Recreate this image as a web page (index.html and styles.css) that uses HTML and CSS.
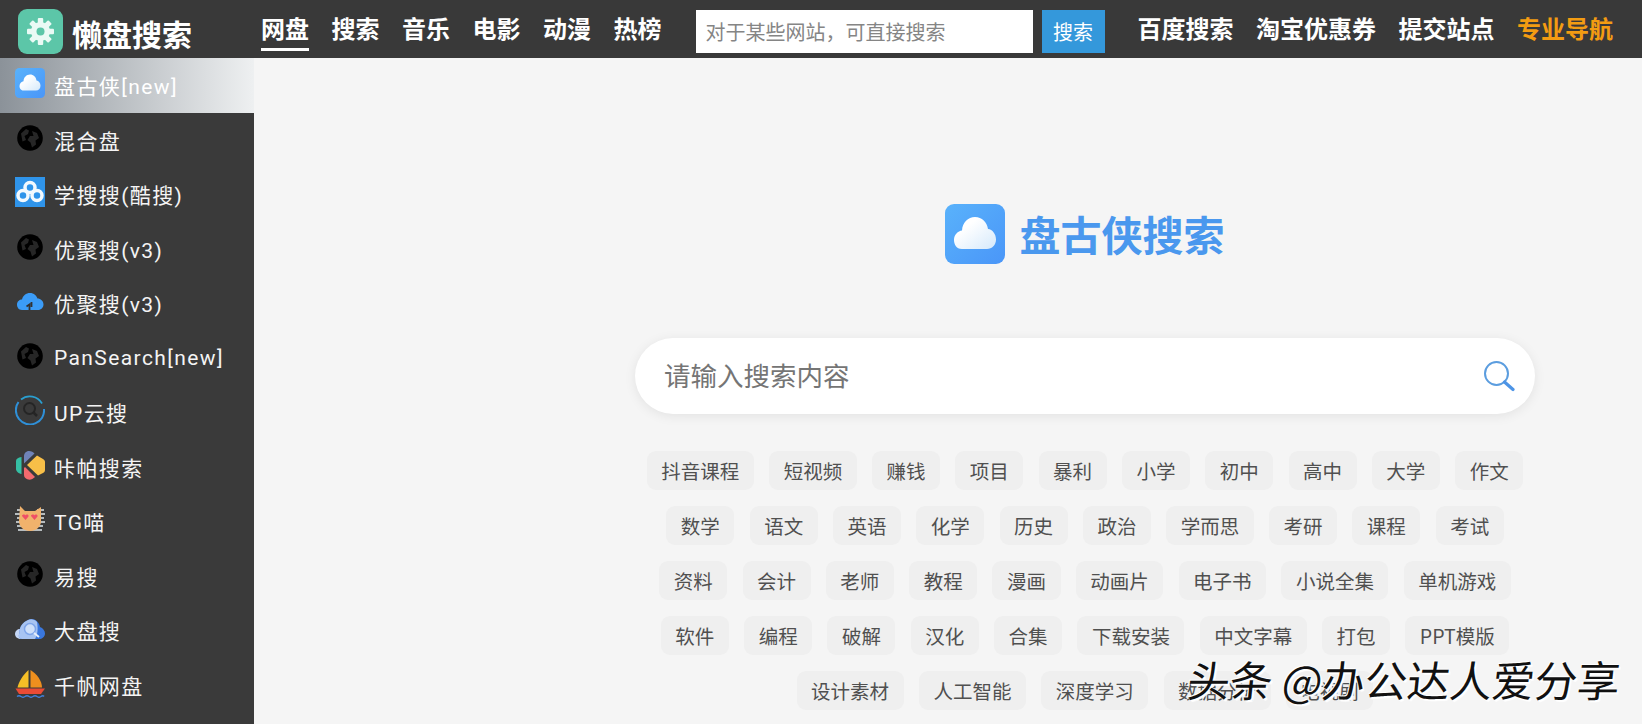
FILE: index.html
```html
<!DOCTYPE html>
<html lang="zh-CN">
<head>
<meta charset="utf-8">
<title>懒盘搜索</title>
<link rel="stylesheet" href="styles.css">
</head>
<body>
<svg class="sprites" width="0" height="0" aria-hidden="true">
  <defs>
    <linearGradient id="gBlue" x1="0" y1="0" x2="1" y2="1"><stop offset="0" stop-color="#59b2fb"/><stop offset="1" stop-color="#4a96f8"/></linearGradient>
    <linearGradient id="gCloud" x1="0" y1="0" x2="1" y2="1"><stop offset="0.300" stop-color="#ffffff"/><stop offset="1" stop-color="#d5e9fb"/></linearGradient>
    <symbol id="cloudlogo" viewBox="0 0 60 60">
      <rect width="60" height="60" rx="9" fill="url(#gBlue)"/>
      <path d="M17 45C11 45 9 40 9 36C9 30.500 13 27 17 26.500C17.500 18.500 23 13 30 13C37 13 42 18 43 25C47.500 25.500 51 30 51 35.500C51 41 47 45 42 45Z" fill="url(#gCloud)"/>
    </symbol>
    <symbol id="globe" viewBox="0 0 30 30">
      <circle cx="15" cy="15" r="12.800" fill="#000"/>
      <path d="M6 10.500L11 6L14 7.500L13 11L9.500 13L11 17L7.500 18.500ZM17 8L22 10L24 15L20.500 17.500L21 21.500L17 24.500L15.500 19.500L12.500 17L15 13L18.500 13Z" fill="#262626"/>
    </symbol>
  </defs>
</svg>

<header class="topbar">
  <a class="brand">
    <span class="brand-icon">
      <svg viewBox="0 0 45 45" width="45" height="45">
        <g fill="#eafaf5">
          <circle cx="22.500" cy="22.500" r="9.500"/>
          <rect x="19.800" y="9" width="5.400" height="27" rx="1"/>
          <rect x="19.800" y="9" width="5.400" height="27" rx="1" transform="rotate(45 22.500 22.500)"/>
          <rect x="19.800" y="9" width="5.400" height="27" rx="1" transform="rotate(90 22.500 22.500)"/>
          <rect x="19.800" y="9" width="5.400" height="27" rx="1" transform="rotate(135 22.500 22.500)"/>
        </g>
        <circle cx="22.500" cy="22.500" r="4" fill="#5cc6a8"/>
      </svg>
    </span>
    <span class="brand-name">懒盘搜索</span>
  </a>
  <nav class="nav nav-main">
    <a class="nav-link nav-current">网盘</a>
    <a class="nav-link">搜索</a>
    <a class="nav-link">音乐</a>
    <a class="nav-link">电影</a>
    <a class="nav-link">动漫</a>
    <a class="nav-link">热榜</a>
  </nav>
  <form class="top-search">
    <input class="top-input" type="text" placeholder="对于某些网站，可直接搜索">
    <button class="top-btn" type="button">搜索</button>
  </form>
  <nav class="nav nav-right">
    <a class="nav-link">百度搜索</a>
    <a class="nav-link">淘宝优惠券</a>
    <a class="nav-link">提交站点</a>
    <a class="nav-link nav-pro">专业导航</a>
  </nav>
</header>

<div class="layout">
  <aside class="sidebar">
    <a class="side-item side-active">
      <svg class="side-icon"><use href="#cloudlogo"/></svg>
      <span>盘古侠[new]</span>
    </a>
    <a class="side-item">
      <svg class="side-icon"><use href="#globe"/></svg>
      <span>混合盘</span>
    </a>
    <a class="side-item">
      <svg class="side-icon" viewBox="0 0 30 30">
        <rect width="30" height="30" fill="#2f94ea"/>
        <g fill="none" stroke="#f2f9fe" stroke-width="3.500">
          <circle cx="15" cy="10.500" r="5"/>
          <circle cx="8" cy="18.500" r="5"/>
          <circle cx="22" cy="18.500" r="5"/>
        </g>
      </svg>
      <span>学搜搜(酷搜)</span>
    </a>
    <a class="side-item">
      <svg class="side-icon"><use href="#globe"/></svg>
      <span>优聚搜(v3)</span>
    </a>
    <a class="side-item">
      <svg class="side-icon" viewBox="0 0 30 30">
        <path d="M7 24C3.500 24 2 21 2 18.500C2 15.500 4.500 13.500 7 13.500C8 9.500 11 7 15 7C19 7 21.500 9.500 22.500 12.500C25.500 12.500 28.500 15 28.500 18.500C28.500 21.500 26 24 23 24Z" fill="#3b9cf7"/>
        <path d="M14.500 24V18.500L11.500 20.500M16.500 16V21" fill="none" stroke="#333" stroke-width="1.800"/>
      </svg>
      <span>优聚搜(v3)</span>
    </a>
    <a class="side-item">
      <svg class="side-icon"><use href="#globe"/></svg>
      <span>PanSearch[new]</span>
    </a>
    <a class="side-item">
      <svg class="side-icon" viewBox="0 0 30 30">
        <path d="M6 4.500A14 14 0 0 1 27 8.500" fill="none" stroke="#2a9fd0" stroke-width="1.800"/>
        <path d="M29 14A14 14 0 0 1 4 24A14 14 0 0 1 3.500 7" fill="none" stroke="#2f90d8" stroke-width="2"/>
        <circle cx="14.500" cy="13.500" r="5.500" fill="none" stroke="#252525" stroke-width="2"/>
        <path d="M18.500 17.500L22 21" stroke="#252525" stroke-width="2.500"/>
      </svg>
      <span>UP云搜</span>
    </a>
    <a class="side-item">
      <svg class="side-icon" viewBox="0 0 30 30">
        <path d="M6.500 7V24C3 23.500 1 21 1 19V11C1 9 3 7.500 6.500 7Z" fill="#35bfa4"/>
        <path d="M9 6C9 3.500 11 1 14 1C16.500 1 18 2 19.500 3.500L9 13.500Z" fill="#6f83b8"/>
        <path d="M12 15L22 5.500L28 9C29.500 10 30 11 30 12V20C30 21.500 29 22.500 28 23L23 25.500Z" fill="#f8bf48"/>
        <path d="M10 17L20 27C18 29 15.500 30 13 29.500C10.500 29 9 27 9 25V18Z" fill="#f26a6e"/>
      </svg>
      <span>咔帕搜索</span>
    </a>
    <a class="side-item">
      <svg class="side-icon" viewBox="0 0 30 30">
        <path d="M2 6H8M22 6H29M0 10H6M24 10H30M2 14H5M25 14H29M1 18H5M25 18H30M2 22H8M22 22H28M3 26H27" stroke="#dfe7ea" stroke-width="1.600"/>
        <path d="M5 2L10 7H20L26 3V17C26 23 21 27 15 27C9 27 4 23 4 17Z" fill="#f0b26c"/>
        <path d="M7 12C7 10 10 10 10.500 11.500C11 10 14 10 13.500 12.500L10.500 16ZM16 12C16 10 19 10 19.500 11.500C20 10 23 10 22.500 12.500L19.500 16Z" fill="#ef4f66"/>
      </svg>
      <span>TG喵</span>
    </a>
    <a class="side-item">
      <svg class="side-icon"><use href="#globe"/></svg>
      <span>易搜</span>
    </a>
    <a class="side-item">
      <svg class="side-icon" viewBox="0 0 30 30">
        <path d="M6 26C2 26 0 23.500 0 21C0 18 2.500 16 5 16L10 24Z" fill="#c5d6f5"/>
        <path d="M7 26C4 26 3 23 4.500 20C4 14 8 9 13 7C18 4 24 8 25 14C28 15 30 18 30 20.500C30 24 27 26 24 26Z" fill="#3a77dd"/>
        <path d="M7 26C4 26 3 23 4.500 20C4 14 8 9 13 7C16 5.500 20 6.500 22 9C23 14 23 22 20 26Z" fill="#a8c4f2"/>
        <circle cx="15" cy="16" r="5.500" fill="#cfe0fa" stroke="#7fa6ea" stroke-width="1.500"/>
        <path d="M19 20L24 24" stroke="#e6effc" stroke-width="2"/>
      </svg>
      <span>大盘搜</span>
    </a>
    <a class="side-item">
      <svg class="side-icon" viewBox="0 0 30 30">
        <path d="M13.500 2V19.500H2.500C4 13 8 7 13.500 2Z" fill="#f6bf26"/>
        <path d="M15.500 2C22 6 27 13 27 19.500H15.500Z" fill="#ef8f1e"/>
        <path d="M0.500 20.500H30L26 26H4Z" fill="#e94b35"/>
        <path d="M2 28.500Q4 27 6 28.500T10 28.500T14 28.500T18 28.500T22 28.500T26 28.500T29 28.500" fill="none" stroke="#3f7fd8" stroke-width="1.500"/>
      </svg>
      <span>千帆网盘</span>
    </a>
  </aside>

  <main class="content">
    <div class="panel">
      <div class="logo">
        <svg class="logo-icon"><use href="#cloudlogo"/></svg>
        <h1 class="logo-text">盘古侠搜索</h1>
      </div>
      <div class="searchbox">
        <input class="search-input" type="text" placeholder="请输入搜索内容">
        <svg class="search-icon" viewBox="0 0 32 32" width="32" height="32">
          <circle cx="13.500" cy="13.500" r="11.500" fill="none" stroke="#5b9ddf" stroke-width="2"/>
          <path d="M21.500 22L30 29.500" stroke="#4d94e6" stroke-width="3.200" stroke-linecap="round"/>
        </svg>
      </div>
      <div class="tags">
        <a class="tag">抖音课程</a><a class="tag">短视频</a><a class="tag">赚钱</a><a class="tag">项目</a><a class="tag">暴利</a><a class="tag">小学</a><a class="tag">初中</a><a class="tag">高中</a><a class="tag">大学</a><a class="tag">作文</a>
        <a class="tag">数学</a><a class="tag">语文</a><a class="tag">英语</a><a class="tag">化学</a><a class="tag">历史</a><a class="tag">政治</a><a class="tag">学而思</a><a class="tag">考研</a><a class="tag">课程</a><a class="tag">考试</a>
        <a class="tag">资料</a><a class="tag">会计</a><a class="tag">老师</a><a class="tag">教程</a><a class="tag">漫画</a><a class="tag">动画片</a><a class="tag">电子书</a><a class="tag">小说全集</a><a class="tag">单机游戏</a>
        <a class="tag">软件</a><a class="tag">编程</a><a class="tag">破解</a><a class="tag">汉化</a><a class="tag">合集</a><a class="tag">下载安装</a><a class="tag">中文字幕</a><a class="tag">打包</a><a class="tag">PPT模版</a>
        <a class="tag">设计素材</a><a class="tag">人工智能</a><a class="tag">深度学习</a><a class="tag">数据分析</a><a class="tag">电视剧</a>
      </div>
    </div>
  </main>
</div>
<div class="watermark">头条 @办公达人爱分享</div>
</body>
</html>
```
FILE: styles.css
```css
* { box-sizing: border-box; }
html, body { height: 100%; }
body {
  margin: 0;
  height: 724px;
  overflow: hidden;
  position: relative;
  background: #f5f5f5;
  font-family: "Noto Sans CJK SC", "Noto Sans", sans-serif;
}
.sprites { position: absolute; }
.topbar {
  height: 58px;
  background: #393939;
  display: flex;
  align-items: flex-start;
  padding-left: 18px;
}
.brand { display: flex; align-items: center; gap: 9px; width: 243px; margin-top: 7px; }
.brand-icon {
  width: 45px;
  height: 45px;
  border-radius: 9px;
  background: #5cc6a8;
  display: block;
  flex: none;
}
.brand-icon svg { display: block; }
.brand-name { color: #fff; font-size: 30px; font-weight: 700; line-height: 45px; white-space: nowrap; margin-top: 4px; }
.nav { display: flex; gap: 22.500px; }
.nav-link {
  color: #fff;
  font-size: 24px;
  font-weight: 700;
  line-height: 34px;
  white-space: nowrap;
  height: 51px;
  padding-top: 11px;
  border-bottom: 3px solid transparent;
}
.nav-current { border-bottom-color: #fff; }
.top-search { display: flex; gap: 9px; margin: 10px 33px 0 34px; }
.top-input {
  width: 337px;
  height: 43px;
  border: 0;
  background: #fff;
  padding: 0 10px;
  font: 20px "Noto Sans CJK SC", sans-serif;
  outline: none;
}
.top-input::placeholder { color: #858585; opacity: 1; }
.top-btn {
  width: 63px;
  height: 43px;
  border: 0;
  background: #3498db;
  color: #fff;
  font: 20px "Noto Sans CJK SC", sans-serif;
  padding: 0;
}
.nav-pro { color: #f39c12; }
.layout { display: flex; height: 666px; }
.sidebar { width: 254px; flex: none; background: #3a3a3a; height: 666px; overflow: hidden; }
.side-item {
  height: 54.500px;
  display: flex;
  align-items: center;
  padding-left: 15px;
  gap: 9px;
  color: #f4f4f4;
  font-family: Roboto, "Noto Sans CJK SC", sans-serif;
  font-size: 21px;
  letter-spacing: 1.400px;
  white-space: nowrap;
}
.side-item span { margin-top: 0; }
.side-icon { width: 30px; height: 30px; flex: none; margin-top: -4px; }
.side-active {
  width: 254px;
  color: #fff;
  background: linear-gradient(90deg, #8b9299 0%, #eef0f1 100%);
}
.content { flex: 1; padding: 146px 0 0 381px; }
.panel { width: 900px; }
.logo { display: flex; align-items: center; justify-content: center; gap: 15px; height: 60px; margin-bottom: 74px; padding-right: 1px; }
.logo-icon { width: 60px; height: 60px; flex: none; }
.logo-text { margin: -2px 0 0; color: #4a98ee; font-size: 41px; font-weight: 700; line-height: 60px; }
.searchbox {
  height: 76px;
  border-radius: 38px;
  background: #fff;
  box-shadow: 0 2px 12px rgba(0, 0, 0, 0.08);
  display: flex;
  align-items: center;
  padding: 0 20px 0 29px;
}
.search-input {
  flex: 1;
  border: 0;
  outline: none;
  background: transparent;
  font: 26.500px "Noto Sans CJK SC", sans-serif;
  padding: 0 0 3px;
}
.search-input::placeholder { color: #757575; opacity: 1; }
.search-icon { flex: none; }
.tags {
  margin-top: 37px;
  display: flex;
  flex-wrap: wrap;
  justify-content: center;
  gap: 16px 15.300px;
}
.tag {
  height: 39px;
  line-height: 39px;
  padding: 0 14.500px;
  background: #efefef;
  border-radius: 9px;
  color: #505050;
  font-size: 19.500px;
  white-space: nowrap;
}
.watermark {
  position: absolute;
  left: 1188px;
  top: 651px;
  color: #111;
  font-size: 42.500px;
  line-height: 56px;
  white-space: nowrap;
  transform: skewX(-6deg);
  text-shadow: 1px 1px 0 #fff, -1px -1px 0 #fff, 2px 2px 1px #fff;
}
```
